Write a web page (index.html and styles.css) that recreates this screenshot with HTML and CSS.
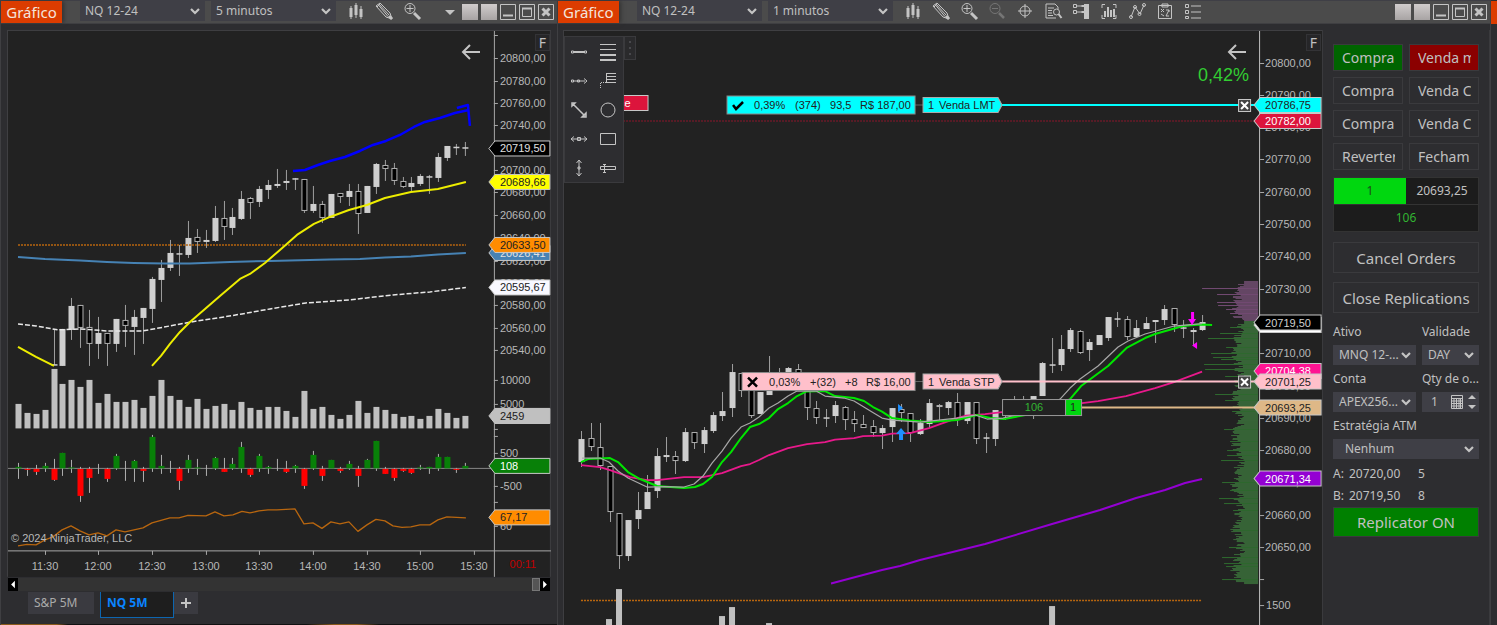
FILE: index.html
```html
<!DOCTYPE html>
<html lang="pt-BR">
<head>
<meta charset="utf-8">
<title>Gráfico NQ 12-24</title>
<link rel="stylesheet" href="styles.css">
</head>
<body>
<svg class="defs" aria-hidden="true">
  <symbol id="i-bars" viewBox="0 0 20 20"><path d="M5 5v13M10 2v15M15 5v13" stroke-width="1"/><path d="M5 7v9M10 4v10M15 8v8" stroke-width="3"/></symbol>
  <symbol id="i-pencil" viewBox="0 0 20 20"><path d="M2 5l4-3 10 10 2 6-6-2zM4 3.500l10 12M5 3l10 11M3 6l4-4" /><path d="M15 15l3 3" stroke-width="3"/></symbol>
  <symbol id="i-zoomin" viewBox="0 0 20 20"><circle cx="8" cy="7.500" r="5"/><path d="M4.500 7.500h7M8 4v7"/><path d="M12 12l6 6" stroke-width="3"/></symbol>
  <symbol id="i-zoomout" viewBox="0 0 20 20"><circle cx="8" cy="7.500" r="5"/><path d="M5 7.500h6"/><path d="M12 12l5 5" stroke-width="2.500"/></symbol>
  <symbol id="i-cross" viewBox="0 0 20 20"><circle cx="10" cy="10" r="5"/><path d="M10 3v14M3 10h14"/></symbol>
  <symbol id="i-doc" viewBox="0 0 20 20"><path d="M15 8V6l-3-3H3v14h10M5 7h6M5 9.500h4M5 12h4M5 14.500h5"/><circle cx="13.500" cy="11" r="3"/><path d="M15.500 13l3 4" stroke-width="2"/></symbol>
  <symbol id="i-panel" viewBox="0 0 20 20"><path d="M2.500 3.500h3v3h-3zM2.500 9.500h3v3h-3zM6 5h7M6 11h7" /><path d="M12 4v2M12 10v2" stroke-width="3"/><path d="M15.500 3v15" stroke-width="5"/></symbol>
  <symbol id="i-chartbox" viewBox="0 0 20 20"><path d="M6 3.500H3V7M14 3.500h3V7M6 17.500H3V14M14 17.500h3V14"/><path d="M6 10v6M9 6v10M12 9v7M15 8v8" stroke-width="2"/></symbol>
  <symbol id="i-poly" viewBox="0 0 20 20"><path d="M4 16L8 6l5 7 4-9"/><circle cx="4" cy="16" r="1.500"/><circle cx="8" cy="6" r="1.500"/><circle cx="12.500" cy="13" r="1.500"/><circle cx="17" cy="4" r="1.500"/></symbol>
  <symbol id="i-clip" viewBox="0 0 20 20"><path d="M3.500 4.500h13v13h-13zM7 3h6v3H7zM6 8l3 3M9 8l-3 3M11 15l3-6M6 13l3 2M11 9h3v2M11 15h3"/></symbol>
  <symbol id="i-list" viewBox="0 0 20 20"><path d="M2.500 3.500h3v3h-3zM2.500 9.500h3v3h-3zM2.500 15.500h3v2h-3zM8 5h10M8 11h10M8 17h10"/></symbol>
  <symbol id="i-down" viewBox="0 0 10 8"><path d="M1 2l4 4 4-4" stroke-width="2.200"/></symbol>
  <symbol id="i-back" viewBox="0 0 20 18"><path d="M19 9H2M9 2L2 9l7 7" stroke-width="2"/></symbol>
  <symbol id="i-min" viewBox="0 0 16 16"><path d="M.500.500h15v15H.500z"/><path d="M3 11.500h10" stroke-width="2"/></symbol>
  <symbol id="i-max" viewBox="0 0 16 16"><path d="M.500.500h15v15H.500zM3.500 4.500h9v8h-9z"/><path d="M3 4.500h10" stroke-width="2"/></symbol>
  <symbol id="i-close" viewBox="0 0 16 16"><path d="M.500.500h15v15H.500z"/><path d="M4.500 4.500l7 7M11.500 4.500l-7 7" stroke-width="3"/></symbol>
</svg>

<main class="desk">
  <section class="win win-left">
    <header class="bar">
      <h1 class="title">Gráfico</h1>
      <label class="pick"><select aria-label="Ativo"><option>NQ 12-24</option></select><svg class="chev"><use href="#i-down"/></svg></label>
      <label class="pick"><select aria-label="Intervalo"><option>5 minutos</option></select><svg class="chev"><use href="#i-down"/></svg></label>
      <nav class="tools">
        <button aria-label="Barras"><svg><use href="#i-bars"/></svg></button>
        <button aria-label="Desenho"><svg><use href="#i-pencil"/></svg></button>
        <button aria-label="Ampliar"><svg><use href="#i-zoomin"/></svg></button>
      </nav>
      <div class="ctl">
        <button class="more" aria-label="Mais"></button>
        <button class="sq" aria-label="Link do ativo"></button>
        <button class="sq" aria-label="Link do intervalo"></button>
        <button aria-label="Minimizar"><svg><use href="#i-min"/></svg></button>
        <button aria-label="Maximizar"><svg><use href="#i-max"/></svg></button>
        <button aria-label="Fechar"><svg><use href="#i-close"/></svg></button>
      </div>
    </header>
    <div class="chart">
      <svg id="chart5" class="plot" viewBox="7 30 544 547"></svg>
      <button class="back" aria-label="Voltar"><svg><use href="#i-back"/></svg></button>
      <button class="fix">F</button>
    </div>
    <div class="scroll">
      <button class="end" aria-label="Rolar à esquerda"><svg viewBox="0 0 10 14"><path d="M7 3v8L3 7z"/></svg></button>
      <span class="thumb"></span>
      <button class="end" aria-label="Rolar à direita"><svg viewBox="0 0 10 14"><path d="M3 3v8l4-4z"/></svg></button>
    </div>
    <div class="tabs">
      <button class="tab">S&amp;P 5M</button>
      <button class="tab on">NQ 5M</button>
      <button class="tab add" aria-label="Nova aba"><svg viewBox="0 0 12 12"><path d="M6 1v10M1 6h10"/></svg></button>
    </div>
    <div class="strip"></div>
  </section>

  <section class="win win-right">
    <header class="bar">
      <h1 class="title">Gráfico</h1>
      <label class="pick"><select aria-label="Ativo"><option>NQ 12-24</option></select><svg class="chev"><use href="#i-down"/></svg></label>
      <label class="pick"><select aria-label="Intervalo"><option>1 minutos</option></select><svg class="chev"><use href="#i-down"/></svg></label>
      <nav class="tools">
        <button aria-label="Barras"><svg><use href="#i-bars"/></svg></button>
        <button aria-label="Desenho"><svg><use href="#i-pencil"/></svg></button>
        <button aria-label="Ampliar"><svg><use href="#i-zoomin"/></svg></button>
        <button aria-label="Reduzir" class="off"><svg><use href="#i-zoomout"/></svg></button>
        <button aria-label="Cursor"><svg><use href="#i-cross"/></svg></button>
        <button aria-label="Dados"><svg><use href="#i-doc"/></svg></button>
        <button aria-label="Chart Trader"><svg><use href="#i-panel"/></svg></button>
        <button aria-label="Séries"><svg><use href="#i-chartbox"/></svg></button>
        <button aria-label="Indicadores"><svg><use href="#i-poly"/></svg></button>
        <button aria-label="Estratégias"><svg><use href="#i-clip"/></svg></button>
        <button aria-label="Propriedades"><svg><use href="#i-list"/></svg></button>
      </nav>
      <div class="ctl">
        <button class="sq" aria-label="Link do ativo"></button>
        <button class="sq" aria-label="Link do intervalo"></button>
        <button aria-label="Minimizar"><svg><use href="#i-min"/></svg></button>
        <button aria-label="Maximizar"><svg><use href="#i-max"/></svg></button>
        <button aria-label="Fechar"><svg><use href="#i-close"/></svg></button>
      </div>
    </header>
    <div class="body">
      <div class="chart">
        <svg id="chart1" class="plot" viewBox="563 30 759 595"></svg>
        <div class="palette">
          <div class="grid">
            <button aria-label="Linha"><svg viewBox="0 0 18 18"><path d="M4 9h10" stroke-width="2"/><path d="M1.500 8h2v2h-2zM14.500 8h2v2h-2z"/></svg></button>
            <button aria-label="Retração"><svg viewBox="0 0 18 18"><path d="M1 1.500h16M1 6.500h16"/><path d="M1 12h16M1 17h16" stroke-width="2"/></svg></button>
            <button aria-label="Raio"><svg viewBox="0 0 18 18"><path d="M3 9h12M1.500 8h2v2h-2zM7.500 8h2v2h-2zM14 6.500L17 9l-3 2.500"/></svg></button>
            <button aria-label="Extensão"><svg viewBox="0 0 18 18"><path d="M7.500 10V1M7 1.500h10M7 4.500h10M7 7.500h10M7 10.500h10"/><path d="M7 10.500H1.500V17" stroke-dasharray="1 1"/></svg></button>
            <button aria-label="Linha com seta"><svg viewBox="0 0 18 18"><path d="M3 3l12 12M2 5V2h3zM16 12v4h-4zM8 8l2 2" stroke-width="1.500"/></svg></button>
            <button aria-label="Elipse"><svg viewBox="0 0 18 18"><circle cx="9" cy="9" r="7"/></svg></button>
            <button aria-label="Linha horizontal"><svg viewBox="0 0 18 18"><path d="M1 9h16M4 6.500L1 9l3 2.500M14 6.500L17 9l-3 2.500M7.500 7.500h3v3h-3z"/></svg></button>
            <button aria-label="Retângulo"><svg viewBox="0 0 18 18"><path d="M1.500 3.500h15v11h-15z"/></svg></button>
            <button aria-label="Linha vertical"><svg viewBox="0 0 18 18"><path d="M9 1v16M6.500 4L9 1l2.500 3M6.500 14L9 17l2.500-3M8 8h2v2H8z"/></svg></button>
            <button aria-label="Régua"><svg viewBox="0 0 18 18"><path d="M1.500 7.500h15v3h-15zM5.500 5v8M4 5.500h3M4 13.500h3"/></svg></button>
          </div>
          <div class="grip"><i></i><i></i><i></i></div>
        </div>
        <button class="back" aria-label="Voltar"><svg><use href="#i-back"/></svg></button>
        <button class="fix">F</button>
      </div>
      <aside class="trader">
        <div class="orders">
          <button class="buy"><span>Compra</span></button><button class="sell"><span>Venda m</span></button>
          <button><span>Compra</span></button><button><span>Venda C</span></button>
          <button><span>Compra</span></button><button><span>Venda C</span></button>
          <button><span>Reverter</span></button><button><span>Fecham</span></button>
        </div>
        <div class="pos"><span class="lots">1</span><span class="avg">20693,25</span><span class="pnl">106</span></div>
        <button class="wide">Cancel Orders</button>
        <button class="wide">Close Replications</button>
        <div class="fields">
          <label for="ativo">Ativo</label><label for="val">Validade</label>
          <div class="pick"><select id="ativo"><option>MNQ 12-...</option></select><svg class="chev"><use href="#i-down"/></svg></div>
          <div class="pick"><select id="val"><option>DAY</option></select><svg class="chev"><use href="#i-down"/></svg></div>
          <label for="conta">Conta</label><label for="qty">Qty de o...</label>
          <div class="pick"><select id="conta"><option>APEX256...</option></select><svg class="chev"><use href="#i-down"/></svg></div>
          <div class="pick qty"><input id="qty" value="1"><svg class="calc" viewBox="0 0 12 14"><path d="M.500.500h11v13H.500zM1 3.500h10M1 6h10M1 8.500h10M1 11h10M3 4v9M5.500 4v9M8 4v9M9.500 4v9"/></svg><svg class="spin" viewBox="0 0 8 14"><path d="M0 4l4-4 4 4zM0 10l4 4 4-4z"/></svg></div>
          <label for="atm" class="full">Estratégia ATM</label>
          <div class="pick full atm"><select id="atm"><option>Nenhum</option></select><svg class="chev"><use href="#i-down"/></svg></div>
        </div>
        <div class="quote"><span>A:</span><span>20720,00</span><span>5</span><span>B:</span><span>20719,50</span><span>8</span></div>
        <button class="wide on">Replicator ON</button>
      </aside>
    </div>
  </section>

  <section class="next"><div class="flag"></div></section>
</main>
<script src="charts.js"></script>
</body>
</html>
```

FILE: styles.css
```css
* { box-sizing: border-box; }
body {
  margin: 0;
  background: #2d2d30;
  color: #c0c0c0;
  font: 12px/16px "Noto Sans", "Open Sans", sans-serif;
  overflow: hidden;
}
button, select, input { font: inherit; color: inherit; }
button { margin: 0; padding: 0; border: 0; background: none; cursor: pointer; }
svg { display: block; fill: none; stroke: #c4c4c4; }
.defs { position: absolute; width: 0; height: 0; }

.desk { display: flex; min-height: 100vh; align-items: stretch; }
.win { display: flex; flex-direction: column; min-width: 0; }
.win-left { flex: 557 1 0; border-left: 1px solid #3f3f42; }
.win-right { flex: 934 1 0; border-left: 1px solid #3f3f42; }
.next { flex: 6 1 0; border-left: 1px solid #3f3f42; background: #2d2d30; }
.flag { height: 23px; margin-top: 1px; background: #dc3c00; }

/* title bar */
.bar {
  display: flex;
  align-items: center;
  height: 24px;
  background: #4b4b4b;
  border-top: 1px solid #3f3f46;
  border-bottom: 1px solid #3f3f42;
}
.title {
  margin: 0 18px 0 0;
  width: 61px;
  background: #dc3c00;
  color: #f4e4dc;
  font-size: 15px;
  font-weight: 400;
  line-height: 22px;
  text-align: center;
  box-shadow: 2px 0 4px #333;
}
.pick {
  display: flex;
  align-items: center;
  position: relative;
  height: 20px;
  background: #3f3f46;
}
.pick select {
  appearance: none;
  width: 100%;
  height: 20px;
  padding: 0 20px 0 6px;
  border: 0;
  background: none;
  outline: 0;
}
.chev { position: absolute; right: 5px; top: 6px; width: 10px; height: 8px; pointer-events: none; }
.bar .pick { width: 125px; margin: 0 6px 2px 0; }
.bar select { padding-left: 5px; }
.tools { display: flex; gap: 8px; margin: 0 0 2px 4px; }
.tools svg { width: 20px; height: 20px; }
.tools .off { opacity: .35; }
.ctl { display: flex; align-items: center; gap: 3px; margin: 0 3px 0 auto; }
.ctl svg, .sq { width: 16px; height: 16px; }
.sq { background: linear-gradient(#d0cccc, #a8a4a4); }
.more { margin-right: 4px; border: 5px solid transparent; border-top-color: #c4c4c4; border-bottom: 0; }

/* charts */
.chart { position: relative; min-width: 0; }
.win-left .chart { margin: 6px 6px 0; }
.plot { width: 100%; height: auto; }
.plot text { stroke: none; fill: #b8b8b8; font: 11px "Liberation Sans", sans-serif; }
.back { position: absolute; top: 13px; right: 70px; }
.win-right .back { right: 75px; }
.back svg { width: 20px; height: 18px; }
.fix {
  position: absolute;
  top: 4px;
  right: 1px;
  width: 15px;
  height: 17px;
  border: 1px solid #333336;
  background: #262628;
  font-size: 14px;
  line-height: 15px;
}

.scroll { display: flex; align-items: center; height: 15px; margin: 0 6px; background: #333; border: 1px solid #2d2d30; }
.end { background: #000; }
.end svg { width: 10px; height: 13px; fill: #fff; stroke: none; }
.thumb { width: 8px; height: 13px; margin-left: auto; background: #555; border: 1px solid #777; }
.tabs { display: flex; align-items: flex-start; margin-left: 27px; }
.tab { width: 66px; height: 22px; padding: 0 6px; background: #3a3a40; text-align: left; color: #aaa; }
.tab.on { width: 74px; height: 26px; margin-left: 6px; padding-bottom: 3px; border: 1px solid #0d66b0; border-top: 0; background: #1e1e1e; color: #0a84ff; font-weight: 700; }
.tab.add { width: 24px; }
.tab.add svg { width: 12px; height: 12px; stroke-width: 2; }
.strip { height: 1px; margin-top: auto; background: linear-gradient(90deg, #8a5a1a, #8a5a1a 10%, #111 12%, #111 55%, #8a5a1a 60%, #8a5a1a 64%, #111 68%); }

.body { display: grid; grid-template-columns: minmax(0, 759fr) minmax(0, 168fr); margin: 6px 0 0 5px; }

/* drawing tools laid over the plot */
.palette { position: absolute; left: 1px; top: 6px; display: flex; align-items: flex-start; }
.grid { display: grid; grid-template-columns: 29px 29px; grid-auto-rows: 29px; border: 1px solid #3a3a3d; background: #2d2d30; }
.grid button { display: grid; place-items: center; }
.grid svg { width: 18px; height: 18px; }
.grip { display: flex; flex-direction: column; align-items: center; justify-content: space-evenly; width: 12px; height: 24px; border: 1px solid #3a3a3d; background: #2a2a2c; }
.grip i { width: 2px; height: 2px; background: #48484c; }

/* order entry */
.trader { display: flex; flex-direction: column; padding: 14px 10px 0; border-left: 1px solid #3a3a3d; border-right: 1px solid #3a3a3d; }
.orders { display: grid; grid-template-columns: 1fr 1fr; gap: 6px; }
.orders button { height: 27px; padding: 0 7px 0 8px; border: 1px solid #3a3a3d; font-size: 14px; line-height: 25px; text-align: left; min-width: 0; }
.orders span { display: block; overflow: hidden; white-space: nowrap; }
.orders .buy { background: #006400; }
.orders .sell { background: #8b0000; }
.pos { display: grid; grid-template-columns: 1fr 1fr; margin-top: 7px; background: #1c1c1c; border: 1px solid #333; text-align: center; line-height: 26px; }
.lots { background: #00d70f; color: #1c4a1c; }
.pnl { grid-column: 1 / 3; color: #32b432; border-top: 1px solid #333; }
.wide { height: 31px; margin-top: 9px; border: 1px solid #3a3a3d; font-size: 15px; line-height: 20px; white-space: nowrap; }
.pos + .wide { margin-top: 10px; }
.wide.on { height: 30px; margin-top: 0; background: #008000; }
.fields { display: grid; grid-template-columns: 85fr 55fr; column-gap: 6px; margin-top: 8px; }
.fields label { height: 24px; line-height: 22px; white-space: nowrap; }
.fields .pick { margin-bottom: 3px; min-width: 0; }
.fields .full { grid-column: 1 / 3; }
.fields select { padding-right: 10px; }
.fields .atm select { padding-left: 12px; }
.qty input { width: 24px; min-width: 0; border: 0; padding: 0 0 0 9px; background: none; }
.calc { width: 12px; height: 14px; margin-left: auto; }
.spin { width: 8px; height: 14px; margin: 0 3px 0 5px; fill: #c4c4c4; stroke: none; }
.quote { display: grid; grid-template-columns: 16px 69px 1fr; line-height: 22px; margin-top: 1px; }
```

FILE: charts.js
```js
const NS = 'http://www.w3.org/2000/svg';
const draw = root => {
  const add = (name, attrs, text) => {
    const el = document.createElementNS(NS, name);
    for (const key in attrs) el.setAttribute(key, attrs[key]);
    if (text !== undefined) el.textContent = text;
    root.appendChild(el);
    return el;
  };
  const rect = (x, y, w, h, fill, stroke = 'none') => add('rect', { x, y, width: w, height: h, fill, stroke, 'stroke-width': 1 });
  const line = (x1, y1, x2, y2, stroke, w = 1, dash = 'none') => add('path', { d: `M${x1} ${y1}L${x2} ${y2}`, stroke, 'stroke-width': w, 'stroke-dasharray': dash });
  const poly = (pts, stroke, w = 2, dash = 'none') => add('polyline', { points: pts, stroke, 'stroke-width': w, 'stroke-dasharray': dash, 'stroke-linejoin': 'round' });
  const text = (x, y, s, fill, anchor = 'start') => {
    const el = add('text', { x, y, 'text-anchor': anchor }, s);
    if (fill) el.style.fill = fill;
    return el;
  };
  // kind: w = rising, b = falling, d = open equals close
  const candle = (x, kind, top, bottom, high = top, low = bottom) => {
    line(x, high, x, low, '#a0a0a0');
    if (kind === 'w') rect(x - 3, top, 6, bottom - top, '#cfcfcf');
    if (kind === 'b') rect(x - 2.5, top + 0.5, 5, bottom - top - 1, '#000', '#b0b0b0');
    if (kind === 'd') line(x - 3, top, x + 3, top, '#cfcfcf', 1.5);
  };
  const flag = (axis, right, y, s, fill, color) => {
    add('path', { d: `M${axis - 6} ${y}L${axis} ${y - 7.5}H${right}V${y + 7.5}H${axis}Z`, fill, stroke: '#c8c8c8', 'stroke-width': 1 });
    text(axis + 5, y + 4, s, color);
  };
  return { add, rect, line, poly, text, candle, flag };
};

function fiveMinutes() {
  const { add, rect, line, poly, text, candle, flag } = draw(document.getElementById('chart5'));
  const X = i => Math.round(17.7 + 8.95 * i) + 0.5;
  rect(7, 30, 544, 547, '#222');
  line(7, 30.5, 551, 30.5, '#3f3f42'); line(7.5, 30, 7.5, 577, '#3f3f42'); line(550.5, 30, 550.5, 577, '#3f3f42');

  const bars = [
    ['d', 365, 365, 329, 365], ['w', 329, 366], ['w', 306, 330, 298, 340], ['b', 305, 328, 305, 348], ['b', 327, 344, 310, 366],
    ['w', 333, 344, 317, 359], ['b', 333, 344, 333, 366], ['w', 319, 344, 319, 352], ['b', 320, 326, 305, 347], ['w', 317, 327, 310, 355],
    ['w', 308, 318, 308, 344], ['w', 279, 309, 277, 323], ['w', 268, 280, 260, 302], ['w', 253, 268, 240, 271], ['d', 254, 254, 245, 276],
    ['w', 238, 255, 221, 258], ['b', 237, 242, 229, 253], ['w', 240, 242, 230, 248], ['w', 218, 241, 206, 242], ['b', 218, 227, 201, 240], ['w', 217, 228, 208, 235],
    ['w', 199, 219, 191, 220], ['b', 198, 203, 197, 219], ['w', 189, 202, 186, 207], ['w', 185, 190, 180, 199], ['w', 184, 186, 169, 188],
    ['w', 181, 183, 170, 190], ['d', 179, 179, 178, 190], ['b', 179, 211, 179, 213], ['w', 204, 211, 186, 213], ['b', 204, 218, 201, 223],
    ['w', 194, 218], ['b', 193, 197, 193, 203], ['w', 191, 197, 184, 206], ['b', 191, 214, 184, 234], ['w', 186, 213],
    ['w', 164, 187, 163, 194], ['b', 165, 169, 160, 181], ['b', 168, 181, 163, 185], ['b', 181, 187, 177, 188], ['w', 183, 187, 177, 191],
    ['w', 176, 184, 174, 186], ['d', 177, 177, 175, 194], ['w', 157, 178, 153, 182], ['w', 146, 158, 146, 161], ['d', 147.5, 147.5, 144, 155], ['d', 148, 148, 142, 156]
  ];
  bars.forEach((b, i) => candle(X(i + 4), ...b));

  line(18, 245, 466, 245, '#b8660f', 1.5, '2 1');
  poly('18,257 45,259 80,260.500 107,262 134,263 165,263.500 190,263.500 230,262 270,261 330,259.500 360,259 385,257.500 411,256.500 438,254.500 466,253', '#4682b4');
  poly('18,324 36,326 58,330 80,329 107,331 143,331 170,326 197,321 224,317 242,314 270,309 306,303 349,300 393,295 430,292 466,287.500', '#e8e8e8', 1.5, '5 2');
  poly('18,347 36,357 54,366', '#eded00');
  poly('152,366 161,356 170,344 180,332 190,322 205,309 220,296 240,279 250,274 265,263 280,250 297,235 314,224 330,217 349,210 367,205 385,198 411,192 438,189 466,182', '#eded00');
  poly('293,171 305,170 318,165 330,161 345,157 360,151 373,145 386,141 400,135 414,127 425,122 440,118 455,113 469,110', '#00f', 2.5);
  poly('457,108 468,105 470,126', '#00f', 2.5);

  const vol = [404, 413, 414, 410, 369, 384, 380, 387, 380, 403, 394, 402, 402, 400, 408, 396, 380, 396, 400, 407, 399, 409, 406, 404, 410, 402, 408, 410, 407, 407, 411, 417, 391, 409, 407, 415, 419, 415, 401, 413, 407, 410, 414, 417, 416, 419, 416, 409, 413, 418, 416];
  vol.forEach((y, i) => rect(X(i) - 3, y, 6, 428.5 - y, '#c0c0c0'));

  line(8, 468.5, 494, 468.5, '#888');
  const delta = [
    [467, 463, 479], [470, 468, 476], [472, 465, 475], [466, 463, 472], [480, 459, 481], [453, 453, 476], [467.5, 460, 473], [496, 467, 502], [478, 467, 493], [468, 464, 474],
    [479, 468, 482], [456, 454, 470], [468, 461, 481], [461, 460, 482], [471, 467, 482], [437, 435, 472], [466, 455, 474], [468, 461, 473], [481, 467, 490], [460, 455, 473],
    [467.5, 459, 475], [468, 465, 476], [458, 457, 470], [472, 458, 472], [464, 458, 470], [447, 442, 473], [475, 468, 477], [456, 454, 472], [467, 466, 474], [468, 459, 471],
    [472, 461, 473], [466, 465, 473], [486, 468, 489], [455, 451, 470], [476, 466, 481], [460, 460, 468], [471, 467, 473], [464, 461, 470], [476, 466, 487], [460, 459, 468],
    [441, 441, 471], [474, 467, 474], [478, 468, 481], [471, 468, 472], [473, 468, 474], [467.5, 465, 470], [467, 467, 474], [457, 454, 471], [457, 457, 468], [470, 468, 473], [466, 463, 468]
  ];
  delta.forEach(([y, hi, lo], i) => {
    line(X(i), hi, X(i), lo, '#b0b0b0');
    if (y < 468) rect(X(i) - 3, y, 6, 468.5 - y, '#088008');
    if (y > 468.5) rect(X(i) - 3, 469, 6, y - 469, '#f00');
  });
  poly('18,546 27,544.500 36,545 45,540 53,537 62,530 71,526 80,531 89,535 98,533 107,536 116,530 125,532 134,530 143,528 152,523 170,518 179,518 188,515.500 206,516 215,512 224,516 233,515 242,511.500 250,513 259,511 268,510 277,510 295,509 304,524 313,523 322,528.500 331,522 340,524 349,522 358,531.500 367,525 376,519.500 385,521 393,526 402,527.500 411,527 420,525 430,525 438,520 447,517 466,518', '#b8660f', 1.3);
  text(11, 542, '© 2024 NinjaTrader, LLC');

  line(494.5, 31, 494.5, 577, '#a8a8a8');
  line(8, 551, 551, 551, '#a8a8a8');
  ['11:30', '12:00', '12:30', '13:00', '13:30', '14:00', '14:30', '15:00', '15:30'].forEach((t, i) => {
    const x = Math.round(44.5 + i * 53.7);
    line(x + 0.5, 551, x + 0.5, 555, '#a8a8a8');
    text(x, 570, t, '', 'middle');
  });
  text(523, 568, '00:11', '#c00000', 'middle');
  [35, 429, 436, 502].forEach(y => line(494, y + 0.5, 498, y + 0.5, '#a8a8a8'));
  const ticks = [[58, '20800,00'], [81, '20780,00'], [103, '20760,00'], [125, '20740,00'], [170, '20700,00'], [192, '20680,00'], [215, '20660,00'], [238, '20640,00'], [261, '20620,00'], [283, '20600,00'], [305, '20580,00'], [328, '20560,00'], [350, '20540,00'], [380, '10000'], [404, '5000'], [453, '500'], [486, '-500'], [526, '60']];
  ticks.forEach(([y, s]) => { line(494, y + 0.5, 498, y + 0.5, '#a8a8a8'); text(500, y + 4, s); });
  flag(495, 550, 148.5, '20719,50', '#000', '#e0e0e0');
  flag(495, 550, 182, '20689,66', '#ff0', '#222');
  flag(495, 550, 253, '20626,41', '#4682b4', '#e0e0e0');
  flag(495, 550, 245, '20633,50', '#ff8c00', '#222');
  flag(495, 550, 287.5, '20595,67', '#f8f8ff', '#222');
  flag(495, 550, 416, '2459', '#c0c0c0', '#222');
  flag(495, 550, 466, '108', '#088008', '#fff');
  flag(495, 550, 517.5, '67,17', '#ff8c00', '#222');
}

function oneMinute() {
  const { add, rect, line, poly, text, candle, flag } = draw(document.getElementById('chart1'));
  rect(563, 30, 759, 595, '#222');
  line(563, 30.5, 1322, 30.5, '#3f3f42'); line(563.5, 30, 563.5, 625, '#3f3f42');

  line(620, 121, 1255, 121, '#6a1a28', 1.5, '2 1');
  const bars = [
    ['w', 439, 462, 431, 467], ['b', 438, 447, 423, 451], ['b', 447, 466, 423, 470], ['b', 466, 512, 466, 522], ['b', 513, 556, 513, 569], ['w', 520, 556, 520, 561],
    ['w', 510, 519, 492, 529], ['w', 492, 509, 475, 509], ['w', 456, 491, 448, 498], ['w', 455, 457, 437, 462], ['b', 456, 461, 451, 474], ['w', 432, 461, 428, 462],
    ['b', 432, 443, 432, 449], ['w', 430, 444, 427, 453], ['w', 415, 431, 412, 433], ['w', 411, 416, 392, 421], ['w', 372, 408, 364, 417], ['b', 373, 391, 373, 397],
    ['b', 385, 416, 385, 418], ['w', 392, 414], ['w', 372, 395, 356, 395], ['w', 372, 385, 368, 385], ['w', 368, 380, 367, 380], ['b', 369, 380, 364, 385],
    ['b', 388, 408, 388, 420], ['b', 408, 418, 401, 424], ['d', 418, 418, 409, 427], ['w', 405, 416, 401, 423], ['b', 407, 420, 406, 430], ['b', 419, 424, 411, 432],
    ['b', 424, 428, 415, 428], ['b', 426, 433, 420, 437], ['w', 428, 433, 425, 449], ['w', 408, 427, 408, 442], ['b', 409, 413, 404, 422], ['b', 413, 433, 413, 442],
    ['w', 423, 434, 419, 435], ['w', 403, 424, 399, 427], ['b', 405, 407, 404, 420], ['w', 402, 408, 401, 415], ['b', 402, 420, 393, 426], ['w', 402, 421, 402, 424],
    ['b', 402, 439, 402, 444], ['d', 438, 438, 433, 453], ['w', 410, 439, 410, 446], ['w', 405, 412, 403, 420], ['w', 400, 410, 396, 412], ['w', 400, 410, 396, 412],
    ['w', 396, 410, 396, 419], ['w', 363, 396, 362, 396], ['d', 365, 365, 338, 373], ['w', 349, 365, 335, 371], ['w', 330, 349, 328, 352], ['b', 331, 353, 330, 354],
    ['w', 342, 350, 339, 361], ['w', 335, 345], ['w', 317, 338, 317, 341], ['d', 319, 319, 312, 327], ['b', 319, 337, 316, 340], ['w', 328, 337, 320, 337],
    ['w', 323, 329, 317, 329], ['w', 320, 322, 320, 343], ['w', 309, 320, 305, 325], ['b', 308, 325, 308, 332], ['d', 328, 328, 320, 338], ['w', 330, 332, 328, 345], ['w', 322, 330, 315, 331]
  ];
  const step = (1202 - 581.3) / (bars.length - 1);
  bars.forEach((b, i) => candle(Math.round(581.3 + i * step) + 0.5, ...b));

  poly('581,465 600,467 610,470 630,477 647,480 657,480 684,477 703,477 722,473 741,466 750,464 759,460 769,455 788,448 807,444 825,442 835,439.500 854,438 863,436 882,435.500 892,433.500 910,433 929,428 940,424 957,418 966,415.500 985,414 1002,412 1040,409 1082,403 1098,401 1126,396 1155,388 1174,382 1190,376 1202,371.500', '#e8198b', 1.8);
  poly('831,583.500 882,570 900,566 920,560 985,544 1052,524 1100,510 1136,498 1165,490 1185,483 1202,479', '#9400d3');
  poly('581,462 588,459 610,458 618,462 628,472 640,479 657,486 684,488 695,487 703,484 712,477 722,462 731,452 741,438 750,427 759,424 769,418 778,409 788,403 797,396 806,391.500 825,391 835,396 854,398 864,401 873,407 882,411.500 892,418 910,420.500 929,422 957,420 977,415 990,418 1004,419 1025,415 1050,411 1070,399 1081,386 1108,366 1127,347.500 1145,338 1155,334 1183,326 1200,324.500 1212,325', '#00e600');
  poly('582,458 600,458 609,462 618,471 628,478 647,487 665,486.500 684,487 694,484 703,476 712,463 722,451 731,438 741,427 750,423 759,417 769,408 778,403 788,396 797,391 816,391 825,396 844,398 854,401 872,412 882,418 892,420 920,422 957,418 975,415 987,419 1003,418 1020,414 1045,410 1060,399 1070,388 1080,379 1098,366 1118,347 1128,341 1145,334 1174,326 1202,323.500', '#a8a8a8', 1.2);
  line(581, 600.5, 1202, 600.5, '#b8660f', 1.5, '2 1');
  [[609, 619], [619, 589], [722, 616], [732, 607], [769, 623], [1052, 606]].forEach(([x, y]) => rect(x - 3, y, 6, 625 - y, '#c0c0c0'));

  // trade markers
  add('path', { d: 'M898 404l5 4-5 4zM899 440v-6h-3l5-6 5 6h-3v6z', fill: '#1e90ff', stroke: 'none' });
  add('path', { d: 'M1191 312h3v7h2l-4 6-4-6h3zM1197 342v7l-5-3.500z', fill: '#f0f', stroke: 'none' });

  // volume profile
  const spikes = { 288: 1202, 294: 1217, 302: 1217, 305: 1218, 309: 1226, 313: 1230, 327: 1230, 333: 1220, 338: 1208, 347: 1226, 353: 1211, 357: 1213, 359: 1221, 364: 1204, 369: 1205, 376: 1225, 382: 1235, 394: 1215, 400: 1225, 411: 1232, 429: 1224, 441: 1230, 450: 1227, 455: 1227, 460: 1221, 482: 1222, 490: 1230, 498: 1219, 503: 1224, 510: 1233, 530: 1233, 547: 1229, 557: 1222, 563: 1224, 566: 1226, 579: 1222 };
  for (let y = 281; y < 584; y++) {
    const noise = Math.abs(Math.sin(y * 12.9898) * 43758.5453) % 1;
    const edge = y < 284 || y > 581 || (y > 319 && y < 324);
    const left = spikes[y] || (edge ? 1244 : 1229 + noise * 11 + Math.abs(Math.sin(y / 14)) * 5);
    rect(left, y, 1258 - left, 1, y < 321 ? (spikes[y] ? '#744b74' : '#674867') : (spikes[y] ? '#2f6b2f' : '#386738'));
  }

  line(1259.5, 31, 1259.5, 625, '#c0c0c0');
  ['20800,00', '20790,00', '20780,00', '20770,00', '20760,00', '20750,00', '20740,00', '20730,00', '', '20710,00', '20700,00', '20690,00', '20680,00', '20670,00', '20660,00', '20650,00', ''].forEach((s, i) => {
    const y = Math.round(62.5 + i * 32.3);
    line(1260, y + 0.5, 1264, y + 0.5, '#a8a8a8');
    text(1265, y + 4, s);
  });
  line(1260, 605.5, 1264, 605.5, '#a8a8a8');
  text(1266, 609, '1500');

  // working orders and position
  const order = (y, x, s, fill, cells, label, good) => {
    line(915, y, 923, y, '#666');
    line(1000, y, 1255, y, fill, 2);
    rect(x, y - 9, 915 - x, 18, fill, '#8a8a8a');
    if (good) add('path', { d: `M${x + 6} ${y}l3 4 7-7`, stroke: '#000', 'stroke-width': 2.5 });
    else add('path', { d: `M${x + 6} ${y - 4}l9 9m0-9l-9 9`, stroke: '#000', 'stroke-width': 2.5 });
    cells.forEach(([cx, t]) => text(cx, y + 4, t, '#222'));
    add('path', { d: `M923 ${y - 7.5}H998L1002 ${y}L998 ${y + 7.5}H923Z`, fill, stroke: '#aaa' });
    text(928, y + 4, '1', '#222');
    text(939, y + 4, label, '#222');
    rect(1238.5, y - 5.5, 12, 12, '#444', '#c8c8c8');
    add('path', { d: `M1241 ${y - 3}l7 7m0-7l-7 7`, stroke: '#fff', 'stroke-width': 2 });
    flag(1260, 1321, y, s, fill, '#222');
  };
  flag(1260, 1321, 121, '20782,00', '#dc143c', '#fff');
  order(105, 727, '20786,75', '#0ff', [[754, '0,39%'], [795, '(374)'], [830, '93,5'], [860, 'R$ 187,00']], 'Venda LMT', true);
  rect(600, 95.5, 48, 15, '#dc143c', '#c8c8c8');
  text(619, 107, 'ce', '#fff');
  flag(1260, 1321, 325, '', '#fff', '#222');
  flag(1260, 1321, 322.5, '20719,50', '#000', '#d0d0d0');
  flag(1260, 1321, 371, '20704,38', '#ff1493', '#fff');
  order(381.5, 742, '20701,25', '#ffc0cb', [[769, '0,03%'], [810, '+(32)'], [845, '+8'], [866, 'R$ 16,00']], 'Venda STP', false);
  line(1081, 407.5, 1255, 407.5, '#deb887', 2);
  rect(1002.5, 399.5, 63, 16, '#222', '#999');
  text(1034, 411, '106', '#32b432', 'middle');
  rect(1065.5, 399.5, 16, 16, '#00d70f', '#999');
  text(1073, 411, '1', '#222', 'middle');
  flag(1260, 1321, 407.5, '20693,25', '#deb887', '#222');
  flag(1260, 1321, 478.5, '20671,34', '#9400d3', '#fff');
  text(1249, 81, '0,42%', '#32cd32', 'end').style.fontSize = '18px';
}

fiveMinutes();
oneMinute();
```
